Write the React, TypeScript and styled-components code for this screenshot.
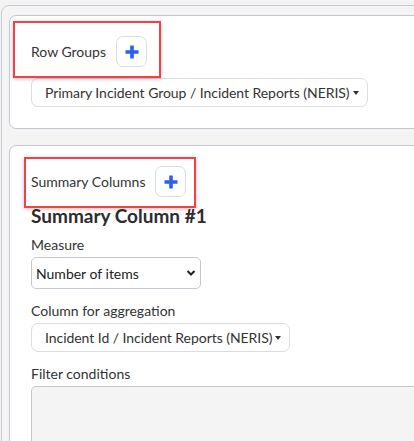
import React from 'react';
import styled, { createGlobalStyle } from 'styled-components';

const GlobalStyle = createGlobalStyle`
  html, body {
    margin: 0;
    padding: 0;
    background: #f3f3f4;
    overflow: hidden;
  }
  body {
    font-family: Lato, 'Open Sans', Arial, sans-serif;
    color: #333;
  }
`;

const Frame = styled.div`
  margin: 5px 0 0 1px;
  width: 560px;
  min-height: 480px;
  border: 1px solid #c9ccd4;
  border-radius: 8px;
  background: #f4f4f5;
  padding: 9px 0 0 7px;
  display: flex;
  flex-direction: column;
  gap: 16px;
`;

const Card = styled.div`
  background: #fff;
  border: 1px solid #c5c8d0;
  border-radius: 7px;
  padding: 20px 21px 21px;
`;

const Header = styled.div<{ $mark: [number, number, number, number] }>`
  position: relative;
  display: flex;
  align-items: center;
  gap: 10px;
  font-size: 14px;

  &::after {
    content: '';
    position: absolute;
    left: ${({ $mark }) => $mark[0]}px;
    top: ${({ $mark }) => $mark[1]}px;
    width: ${({ $mark }) => $mark[2]}px;
    height: ${({ $mark }) => $mark[3]}px;
    border: 2px solid #ee4449;
    box-shadow: 0 1px 4px rgba(0, 0, 0, 0.25);
    pointer-events: none;
  }
`;

const AddButton = styled.button`
  width: 31px;
  height: 31px;
  padding: 0;
  border: 1px solid #dcdde1;
  border-radius: 7px;
  background: #fff;
  display: flex;
  align-items: center;
  justify-content: center;
`;

const Dropdown = styled.div`
  display: inline-flex;
  align-items: center;
  height: 29px;
  box-sizing: border-box;
  padding: 0 8px 0 13px;
  border: 1px solid #dcdde1;
  border-radius: 7px;
  font-size: 14px;
  letter-spacing: -0.05px;
  color: #333;
  white-space: nowrap;

  &::after {
    content: '';
    margin-left: 3px;
    border-left: 3.5px solid transparent;
    border-right: 3.5px solid transparent;
    border-top: 4px solid #333;
  }
`;

const Row = styled.div<{ $top?: number }>`
  margin-top: ${({ $top }) => $top ?? 0}px;
`;

const Heading = styled.h3`
  margin: 9px 0 0;
  font-size: 19px;
  font-weight: 700;
  line-height: 20px;
  color: #2c2c2c;
`;

const Label = styled.div`
  font-size: 14px;
  line-height: 21px;
  margin-bottom: 2px;
`;

const Select = styled.div`
  width: 170px;
  height: 32px;
  box-sizing: border-box;
  border: 1px solid #c5c8d0;
  border-radius: 5px;
  padding: 0 4px 0 4px;
  display: flex;
  align-items: center;
  justify-content: space-between;
  font-size: 14px;
  color: #222;
`;

const FilterBox = styled.div`
  width: 500px;
  height: 80px;
  border: 1px solid #c5c8d0;
  border-radius: 5px;
  background: #f4f4f5;
`;

const Plus = () => (
  <svg width="16" height="16" viewBox="0 0 16 16">
    <path d="M8 1.5v13M1.5 8h13" stroke="#2a60ee" strokeWidth="3.6" strokeLinecap="butt" />
  </svg>
);

const Chevron = () => (
  <svg width="10" height="8" viewBox="0 0 10 8">
    <path d="M1.5 2l3.5 3.5L8.5 2" fill="none" stroke="#222" strokeWidth="2" />
  </svg>
);

export default function App() {
  return (
    <>
      <GlobalStyle />
      <Frame>
        <Card>
          <Header $mark={[-18, -15, 144, 53]}>
            Row Groups
            <AddButton>
              <Plus />
            </AddButton>
          </Header>
          <Row $top={11}>
            <Dropdown>Primary Incident Group / Incident Reports (NERIS)</Dropdown>
          </Row>
        </Card>
        <Card>
          <Header $mark={[-7, -9, 168, 47]}>
            Summary Columns
            <AddButton>
              <Plus />
            </AddButton>
          </Header>
          <Heading>Summary Column #1</Heading>
          <Row $top={8}>
            <Label>Measure</Label>
            <Select>
              Number of items
              <Chevron />
            </Select>
          </Row>
          <Row $top={11}>
            <Label>Column for aggregation</Label>
            <Dropdown>Incident Id / Incident Reports (NERIS)</Dropdown>
          </Row>
          <Row $top={11}>
            <Label>Filter conditions</Label>
            <FilterBox />
          </Row>
        </Card>
      </Frame>
    </>
  );
}
